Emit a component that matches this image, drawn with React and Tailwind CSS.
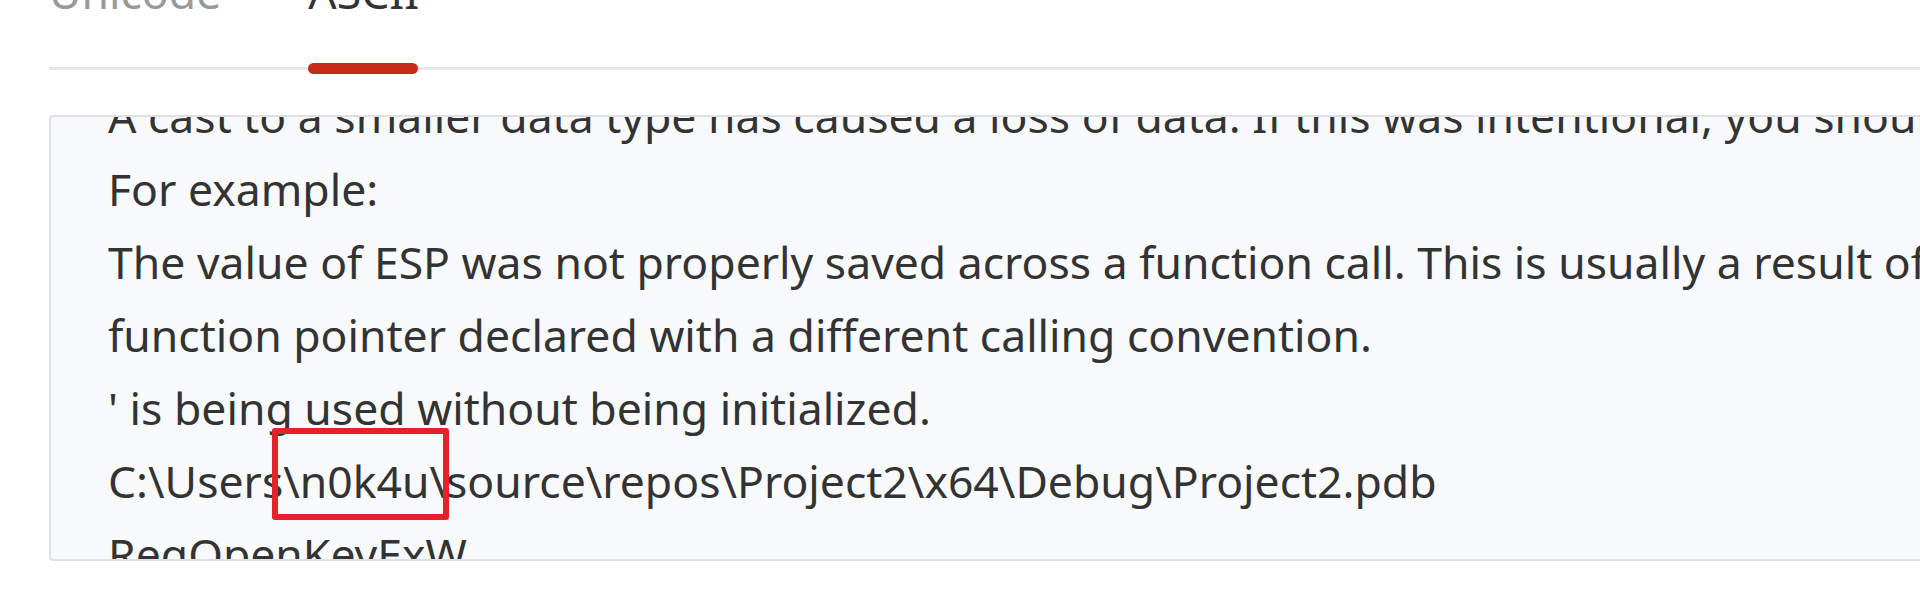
export default function App() {
  const lines = [
    "A cast to a smaller data type has caused a loss of data. If this was intentional, you should mask the source of the cast with the appropriate bitmask.",
    "For example:",
    "The value of ESP was not properly saved across a function call. This is usually a result of calling a function declared with one calling convention with a",
    "function pointer declared with a different calling convention.",
    "' is being used without being initialized.",
  ];

  return (
    <div className="w-[1920px] h-[594px] overflow-hidden bg-white font-['Noto_Sans',sans-serif] text-[44.5px] leading-[73px] text-[#333]">
      <div className="pl-[49px] -mt-[45px]">
        {/* Tabs */}
        <div className="relative flex gap-[87px] pb-[39px] border-b-[3px] border-[#e6e6e6] whitespace-nowrap">
          <span className="text-[#999]">Unicode</span>
          <span className="relative text-[#333]">
            ASCII
            <span className="absolute left-0 -bottom-[46px] h-[11px] w-[110px] rounded-full bg-[#c92a1c]" />
          </span>
        </div>

        {/* Strings panel */}
        <div className="mt-[45px] w-[1950px] h-[446px] overflow-hidden rounded-[4px] border-2 border-[#dfe0e4] bg-[#f8f9fb]">
          <div className="-mt-[38px] pl-[57px] whitespace-nowrap">
            {lines.map((line, i) => (
              <div key={i}>{line}</div>
            ))}
            <div>
              C:\Users
              <span className="relative">
                \n0k4u\
                <span className="absolute -left-[11px] -right-[3px] -top-[22px] -bottom-[9px] rounded-[3px] border-[6px] border-[#e8202a]" />
              </span>
              source\repos\Project2\x64\Debug\Project2.pdb
            </div>
            <div>RegOpenKeyExW</div>
          </div>
        </div>
      </div>
    </div>
  );
}
